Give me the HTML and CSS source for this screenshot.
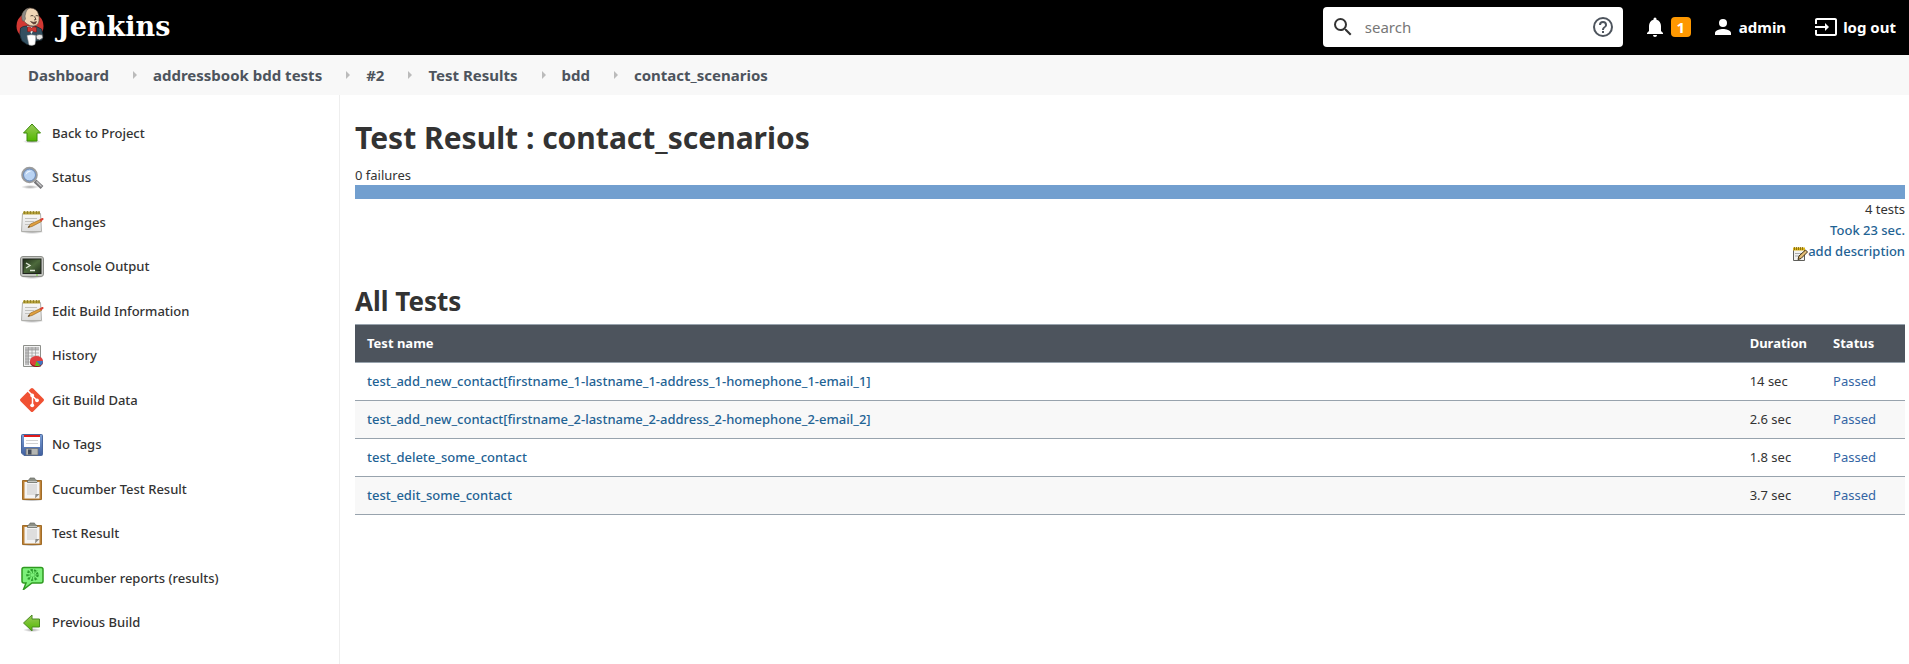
FILE: index.html
```html
<!DOCTYPE html>
<html lang="en">
<head>
<meta charset="utf-8">
<title>Test Result : contact_scenarios [Jenkins]</title>
<link rel="stylesheet" href="styles.css">
</head>
<body>
<svg class="defs" width="0" height="0" aria-hidden="true">
  <defs>
    <linearGradient id="green" x1="0" y1="0" x2="0" y2="1"><stop offset="0" stop-color="#9bcb5c"/><stop offset="1" stop-color="#52b800"/></linearGradient>
    <linearGradient id="paper" x1="0" y1="0" x2="0" y2="1"><stop offset="0" stop-color="#fafafa"/><stop offset="1" stop-color="#dcdcdc"/></linearGradient>
    <linearGradient id="blue" x1="0" y1="0" x2="0" y2="1"><stop offset="0" stop-color="#7da0d6"/><stop offset="1" stop-color="#3f5f9f"/></linearGradient>
    <linearGradient id="screen" x1="0" y1="0" x2="1" y2="1"><stop offset="0" stop-color="#1d2a18"/><stop offset=".5" stop-color="#4d6a3c"/><stop offset="1" stop-color="#22301c"/></linearGradient>
    <radialGradient id="shade"><stop offset="0" stop-color="#000" stop-opacity=".35"/><stop offset="1" stop-color="#000" stop-opacity="0"/></radialGradient>
    <symbol id="notepad" viewBox="0 0 24 24">
      <ellipse cx="12" cy="22" rx="12" ry="2" fill="url(#shade)"/>
      <path d="M2.5 3.5h18l1 18h-20z" fill="url(#paper)" stroke="#b0b0ac"/>
      <path d="M3 1.500h17v3H3z" fill="#b5a13a"/>
      <path d="M4.500 1v3M7.500 1v3M10.500 1v3M13.500 1v3M16.500 1v3M19 1v3" stroke="#8a7820" stroke-width=".8"/>
      <path d="M5 8.500h12M5 11.500h9M5 14.500h5" stroke="#c2c2bf"/>
      <path d="M8 17.500l2.500-3.500 10-4.500 1 2-9.500 5z" fill="#e0a040" stroke="#8c5a14" stroke-width=".6"/>
      <path d="M19.500 9.500l2.500-1.500q2-.5 1.500 1.500l-2.500 2z" fill="#dd4034"/>
      <path d="M8 17.500l1-1.500 1 1z" fill="#222"/>
    </symbol>
    <symbol id="clipboard" viewBox="0 0 24 24">
      <ellipse cx="12" cy="23" rx="11" ry="1.500" fill="url(#shade)"/>
      <path d="M2.500 3.500h19v19h-19z" fill="#bd8237" stroke="#a06c28"/>
      <path d="M4.500 5h15v16.500h-15z" fill="#f4f4f4"/>
      <path d="M7 7h10v11H7z" fill="#dedede"/>
      <path d="M15 21.500l4.500-4.500h-4z" fill="#8c8c88"/>
      <path d="M7.500 5.500V3.500l2-1 .5-1.500h4.500l.5 1.500 2 1v2z" fill="#8d9086" stroke="#666961" stroke-width=".7"/>
      <path d="M8 4.500h9" stroke="#c4c6c0"/>
    </symbol>
  </defs>
</svg>

<header class="topbar">
  <a class="brand" href="#">
    <svg class="brand-logo" viewBox="0 0 28 40" aria-hidden="true">
      <ellipse cx="14" cy="19" rx="13.500" ry="13.500" fill="#d33833"/>
      <path d="M4.500 21q2.500-2 6-2l10 .500 5 2.500 1.500 6-1 5-6 1-3 4-6-.500-5-3.500q-3.500-6-1.500-13z" fill="#335061" stroke="#16252f" stroke-width=".7"/>
      <path d="M11 19l4.500 8 3.500-7z" fill="#f2f2f2"/>
      <path d="M7 7Q8 1.500 14 1q7 0 8.500 6.500 1 3 .5 6.500-.5 4.500-5 5-4 .5-7-2-3-2-4-5-1-3.500 0-6z" fill="#f0d6b7" stroke="#4a3a30" stroke-width=".6"/>
      <path d="M6.500 14Q4.500 8 7.500 4.500q2-3 6-3.500-3 1.500-3.500 4l-1 4 .5 3-1.500 2z" fill="#8d8a86" stroke="#5b524a" stroke-width=".5"/>
      <path d="M14.500 9q1.500-1 3 0M19.500 9q1.500-1 2.500 0M18.500 9.500l1.500 3-2 .5" fill="none" stroke="#44362c" stroke-width=".9"/>
      <path d="M14.500 14.500q3 1.500 6 0-.5 3-3 2.500z" fill="#6b3b35" stroke="#44362c" stroke-width=".6"/>
      <path d="M11.500 20q2.500-1 4 1 2.500-2 5-.500v4.500q-3 .5-4.500-1.500-2 2-4.500 1z" fill="#d33833" stroke="#6b1512" stroke-width=".5"/>
      <path d="M11 28.500q4-1.500 9 0l-1 9q-3 1.500-6 .5z" fill="#fff" stroke="#999" stroke-width=".5"/>
      <path d="M20 28.500q3-2 6.500-.5l.5 3-3.500 2-3-1z" fill="#e6e6e6" stroke="#333" stroke-width=".6"/>
    </svg>
    <span class="brand-name">Jenkins</span>
  </a>
  <form class="search">
    <svg class="search-icon" viewBox="0 0 24 24" aria-hidden="true"><path d="M15.500 14h-.79l-.28-.27A6.470 6.470 0 0 0 16 9.500 6.500 6.500 0 1 0 9.500 16c1.610 0 3.090-.59 4.230-1.570l.27.28v.79l5 4.990L20.490 19zm-6 0C7.010 14 5 11.990 5 9.500S7.010 5 9.500 5 14 7.010 14 9.500 11.990 14 9.500 14z" fill="#333"/></svg>
    <input class="search-input" type="text" placeholder="search" aria-label="search">
    <button class="search-help" type="button" aria-label="Help"><svg viewBox="0 0 24 24"><path d="M11 18h2v-2h-2zm1-16a10 10 0 1 0 0 20 10 10 0 0 0 0-20zm0 18a8 8 0 1 1 0-16 8 8 0 0 1 0 16zm0-14a4 4 0 0 0-4 4h2a2 2 0 1 1 4 0c0 2-3 1.750-3 5h2c0-2.250 3-2.500 3-5a4 4 0 0 0-4-4z" fill="#4d545d"/></svg></button>
  </form>
  <a class="bell" href="#" aria-label="Notifications: 1">
    <svg class="top-icon" viewBox="0 0 24 24" aria-hidden="true"><path d="M12 22c1.100 0 2-.9 2-2h-4a2 2 0 0 0 2 2zm6-6v-5c0-3.070-1.640-5.640-4.500-6.320V4a1.500 1.500 0 0 0-3 0v.68C7.630 5.360 6 7.920 6 11v5l-2 2v1h16v-1z" fill="#fff"/></svg>
    <span class="badge">1</span>
  </a>
  <a class="user" href="#">
    <svg class="top-icon" viewBox="0 0 24 24" aria-hidden="true"><path d="M12 12a4 4 0 1 0 0-8 4 4 0 0 0 0 8zm0 2c-2.670 0-8 1.340-8 4v2h16v-2c0-2.660-5.330-4-8-4z" fill="#fff"/></svg>
    <span>admin</span>
  </a>
  <a class="logout" href="#">
    <svg class="top-icon" viewBox="0 0 24 24" aria-hidden="true"><path d="M21 3.010H3c-1.100 0-2 .9-2 2V9h2V4.990h18v14.030H3V15H1v4.010c0 1.100.9 1.980 2 1.980h18c1.100 0 2-.88 2-1.980v-14c0-1.110-.9-2-2-2zM11 16l4-4-4-4v3H1v2h10z" fill="#fff"/></svg>
    <span>log out</span>
  </a>
</header>

<nav class="crumbs" aria-label="Breadcrumb">
  <a href="#">Dashboard</a>
  <a href="#">addressbook bdd tests</a>
  <a href="#">#2</a>
  <a href="#">Test Results</a>
  <a href="#">bdd</a>
  <a href="#">contact_scenarios</a>
</nav>

<div class="page">
  <nav class="tasks" aria-label="Build">
    <a class="task" href="#"><svg viewBox="0 0 24 24"><ellipse cx="12" cy="20.500" rx="9" ry="2" fill="url(#shade)"/><path d="M12 3l8.500 9H17v8H7v-8H3.500z" fill="url(#green)" stroke="#3d8a0b"/></svg>Back to Project</a>
    <a class="task" href="#"><svg viewBox="0 0 24 24"><ellipse cx="10" cy="21" rx="9" ry="2" fill="url(#shade)"/><path d="M15 15l7 6.500" stroke="#77777a" stroke-width="4"/><path d="M16.500 15.500l5 5" stroke="#c9c9c9" stroke-width="1.200"/><circle cx="9.500" cy="9" r="7" fill="#b9d3f3" stroke="#9c9c9c" stroke-width="2.600"/><circle cx="9.500" cy="9" r="6" fill="none" stroke="#6a8fc4"/><path d="M5.500 9q1-5 6-4-4 1-6 4z" fill="#eef6ff"/></svg>Status</a>
    <a class="task" href="#"><svg><use href="#notepad"/></svg>Changes</a>
    <a class="task" href="#"><svg viewBox="0 0 24 24"><ellipse cx="12" cy="22" rx="11" ry="2" fill="url(#shade)"/><rect x=".5" y="1.500" width="23" height="20" rx="2.500" fill="#c5c7c2" stroke="#8c8e89"/><rect x="3" y="4" width="18" height="14.500" fill="url(#screen)" stroke="#20241e"/><path d="M6 8l4 2.500L6 13M10 15.500h5" fill="none" stroke="#dfe8d8" stroke-width="1.400"/><path d="M16 20h2" stroke="#70d030"/></svg>Console Output</a>
    <a class="task" href="#"><svg><use href="#notepad"/></svg>Edit Build Information</a>
    <a class="task" href="#"><svg viewBox="0 0 24 24"><path d="M3.500 1.500h17v21h-17z" fill="#f3f3f3" stroke="#8d8f8a"/><path d="M5 3h3.500v18H5zM8.500 3H19v3H8.500z" fill="#bdbdbd"/><path d="M5 6h14M5 9h14M5 12h14M5 15h8M5 18h8M8.500 3v18M12 3v12M15.500 3v10" stroke="#989898" stroke-width=".7"/><ellipse cx="16.500" cy="18.500" rx="6.500" ry="4.500" fill="#8e1616"/><ellipse cx="16.500" cy="17" rx="6.500" ry="5" fill="#df3e3e"/><path d="M16.500 17l6.500 0q0 3-2.500 4.500z" fill="#3f76c0"/><path d="M16.500 17l3.500 5h-5z" fill="#5cc020"/></svg>History</a>
    <a class="task" href="#"><svg viewBox="0 0 24 24"><path d="M10.800.6q1.200-1.200 2.400 0l10.200 10.200q1.200 1.200 0 2.400L13.200 23.400q-1.200 1.200-2.400 0L.6 13.200q-1.200-1.200 0-2.400z" fill="#f05133"/><path d="M7.500 2.500l5 5v10M12.500 8l4.500 4.500" fill="none" stroke="#fff" stroke-width="1.500"/><circle cx="12.200" cy="7.500" r="1.900" fill="#fff"/><circle cx="12.200" cy="17.300" r="1.900" fill="#fff"/><circle cx="17" cy="12.300" r="1.900" fill="#fff"/></svg>Git Build Data</a>
    <a class="task" href="#"><svg viewBox="0 0 24 24"><path d="M1.500 2.500q0-1 1-1h19q1 0 1 1v19q0 1-1 1H4l-2.500-2.500z" fill="url(#blue)" stroke="#4a679c"/><path d="M4 2h16v12H4z" fill="#fff"/><path d="M4 2h16v2H4z" fill="#e01b1b"/><path d="M6 7.500h12M6 10.500h12" stroke="#d2d2d2"/><path d="M6 15.500h12V22H6z" fill="#b5b7b4" stroke="#6d6f6d" stroke-width=".7"/><path d="M8 16.500h3.500v5H8z" fill="#444c5a"/></svg>No Tags</a>
    <a class="task" href="#"><svg><use href="#clipboard"/></svg>Cucumber Test Result</a>
    <a class="task" href="#"><svg><use href="#clipboard"/></svg>Test Result</a>
    <a class="task" href="#"><svg viewBox="0 0 24 24"><path d="M4 1.500h17q2 0 2 2V15q0 2-2 2H12l-8.500 6.500L6 17H4q-2 0-2-2V3.500q0-2 2-2z" fill="#7df07a" stroke="#2f9a20" stroke-width="1.500"/><circle cx="12.500" cy="9" r="5" fill="none" stroke="#2b9a2b" stroke-width="2.200" stroke-dasharray="2 1.500"/><path d="M12.500 3v12M6 9h13M8 4.500l9 9M17 4.500l-9 9" stroke="#35a835" stroke-width=".9"/><circle cx="12.500" cy="9" r="1.800" fill="#7df07a"/></svg>Cucumber reports (results)</a>
    <a class="task" href="#"><svg viewBox="0 0 24 24"><ellipse cx="12" cy="19" rx="9" ry="2" fill="url(#shade)"/><path d="M3.500 12L12 4v4h7.500v8H12v4z" fill="url(#green)" stroke="#4b8a22"/></svg>Previous Build</a>
  </nav>

  <main class="main">
    <h1>Test Result : contact_scenarios</h1>
    <div class="failures">0 failures</div>
    <div class="bar"></div>
    <div class="summary">
      <div>4 tests</div>
      <div><a href="#">Took 23 sec.</a></div>
      <div><a class="describe" href="#"><svg viewBox="0 0 16 16" aria-hidden="true"><path d="M1.500 2.500h11v12h-11z" fill="#f1f1ef" stroke="#5e5e5a"/><path d="M1 1.500h12v3H1z" fill="#dcb51c"/><path d="M2.500 1v3M4.500 1v3M6.500 1v3M8.500 1v3M10.500 1v3" stroke="#7c6306" stroke-width=".8"/><path d="M3 7.500h7M3 10h4" stroke="#aaa"/><path d="M6 13.500l1-3.500 6.500-6 2 2-6.500 6.500z" fill="#e3bd76" stroke="#3c2d12"/></svg>add description</a></div>
    </div>
    <h2>All Tests</h2>
    <table class="results">
      <thead>
        <tr><th class="name">Test name</th><th>Duration</th><th>Status</th></tr>
      </thead>
      <tbody>
        <tr><td><a href="#">test_add_new_contact[firstname_1-lastname_1-address_1-homephone_1-email_1]</a></td><td>14 sec</td><td class="passed">Passed</td></tr>
        <tr><td><a href="#">test_add_new_contact[firstname_2-lastname_2-address_2-homephone_2-email_2]</a></td><td>2.6 sec</td><td class="passed">Passed</td></tr>
        <tr><td><a href="#">test_delete_some_contact</a></td><td>1.8 sec</td><td class="passed">Passed</td></tr>
        <tr><td><a href="#">test_edit_some_contact</a></td><td>3.7 sec</td><td class="passed">Passed</td></tr>
      </tbody>
    </table>
  </main>
</div>
</body>
</html>
```

FILE: styles.css
```css
* { box-sizing: border-box; }
body {
  margin: 0;
  min-height: 100vh;
  display: flex;
  flex-direction: column;
  background: #fff;
  color: #333;
  font: 13px/21px "Noto Sans", "Open Sans", sans-serif;
}
a { color: inherit; text-decoration: none; }
svg { display: block; flex: none; }
.defs { position: absolute; }

.topbar {
  display: flex;
  align-items: center;
  height: 55px;
  padding: 0 13px 1px 16px;
  background: #000;
  color: #fff;
  font-size: 15px;
  font-weight: 700;
}
.brand { display: flex; align-items: center; gap: 13px; margin-right: auto; }
.brand-logo { width: 28px; height: 40px; }
.brand-name { font: bold 27px/40px "DejaVu Serif", serif; }
.search {
  display: flex;
  align-items: center;
  width: 300px;
  height: 40px;
  padding: 0 8px;
  border-radius: 4px;
  background: #fff;
}
.search-icon { width: 24px; height: 24px; }
.search-input {
  flex: 1;
  min-width: 0;
  padding: 0 10px;
  border: 0;
  outline: 0;
  background: none;
  font: 15px/24px "Noto Sans", sans-serif;
}
.search-input::placeholder { color: #777; }
.search-help { width: 24px; height: 24px; padding: 0; border: 0; background: none; }
.top-icon { width: 24px; height: 24px; }
.bell, .user, .logout { display: flex; align-items: center; gap: 4px; }
.bell { margin-left: 20px; }
.user { margin-left: 20px; }
.logout { gap: 5px; margin-left: 28px; }
.badge {
  width: 20px;
  border-radius: 4px;
  background: #fe9801;
  line-height: 20px;
  text-align: center;
}

.crumbs {
  display: flex;
  align-items: center;
  height: 40px;
  padding: 0 28px;
  background: #f8f8f8;
  color: #4d545d;
  font-size: 15px;
  font-weight: 700;
}
.crumbs a { display: flex; align-items: center; }
.crumbs a + a::before {
  content: "";
  margin: 0 16px 0 24px;
  border: 4px solid transparent;
  border-left-color: #bbb;
  border-right: 0;
}

.page { flex: 1; display: flex; }
.tasks {
  display: grid;
  width: 340px;
  padding: 16px 20px 19px;
  border-right: 1px solid #eee;
  font-weight: 500;
}
.task { display: flex; align-items: center; gap: 8px; }
.task svg { width: 24px; height: 24px; }
.main { flex: 1; padding: 23px 4px 24px 15px; }
h1, h2 { margin: 0; font-weight: 700; }
h1 { font-size: 30px; line-height: 40px; }
h2 { margin: 13px 0 3px; font-size: 26px; line-height: 40px; }
.failures { margin-top: 7px; line-height: 20px; }
.bar { height: 14px; background: #729fcf; }
.summary { text-align: right; }
.summary a, .results a { color: #1f6394; font-weight: 500; }
.summary .describe { display: inline-flex; align-items: flex-end; }
.describe svg { width: 16px; height: 16px; }
.results { width: 100%; border-collapse: collapse; }
.results th, .results td {
  height: 38px;
  padding: 8px 12px;
  border-top: 1px solid #98a3ad;
  border-bottom: 1px solid #98a3ad;
  text-align: left;
  white-space: nowrap;
}
.results th { background: #4d545d; color: #fff; font-weight: 700; }
.results .name { width: 100%; }
.results th + th { padding-right: 14px; }
.results tbody tr:nth-child(even) { background: #f8f8f8; }
.results .passed { padding-right: 29px; color: #3465a4; }
```
